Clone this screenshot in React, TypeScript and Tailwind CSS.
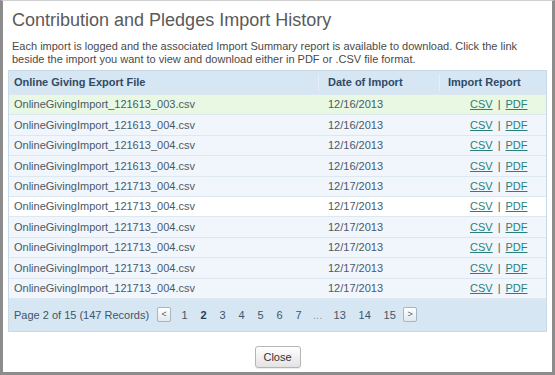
const rows = [
  { file: "OnlineGivingImport_121613_003.csv", date: "12/16/2013", bg: "bg-[#e9f8e2]" },
  { file: "OnlineGivingImport_121613_004.csv", date: "12/16/2013", bg: "bg-[#f0f6fc]" },
  { file: "OnlineGivingImport_121613_004.csv", date: "12/16/2013", bg: "bg-[#f0f6fc]" },
  { file: "OnlineGivingImport_121613_004.csv", date: "12/16/2013", bg: "bg-[#f0f6fc]" },
  { file: "OnlineGivingImport_121713_004.csv", date: "12/17/2013", bg: "bg-[#f0f6fc]" },
  { file: "OnlineGivingImport_121713_004.csv", date: "12/17/2013", bg: "bg-white" },
  { file: "OnlineGivingImport_121713_004.csv", date: "12/17/2013", bg: "bg-[#f0f6fc]" },
  { file: "OnlineGivingImport_121713_004.csv", date: "12/17/2013", bg: "bg-[#f0f6fc]" },
  { file: "OnlineGivingImport_121713_004.csv", date: "12/17/2013", bg: "bg-[#f0f6fc]" },
  { file: "OnlineGivingImport_121713_004.csv", date: "12/17/2013", bg: "bg-[#f0f6fc]" },
];

const pages = ["1", "2", "3", "4", "5", "6", "7", "...", "13", "14", "15"];

function PagerArrow({ dir }: { dir: "prev" | "next" }) {
  return (
    <span className="flex h-[15px] w-[14px] items-center justify-center rounded-[2px] border border-[#a9b4bd] bg-gradient-to-b from-white to-[#e4e8ec] text-[9px] leading-none text-[#556677]">
      {dir === "prev" ? "<" : ">"}
    </span>
  );
}

export default function App() {
  return (
    <div className="h-[375px] w-[555px] bg-white font-['Liberation_Sans',Arial,sans-serif]">
      <div className="flex h-full flex-col border-x-[3px] border-b-[3px] border-t border-x-[#8c8c8c] border-b-[#8c8c8c] border-t-[#d0d0d0] px-[5px]">
        <h1 className="mt-[8px] pl-[4px] text-[18px] leading-[22px] font-normal text-[#5a5a5a]">
          Contribution and Pledges Import History
        </h1>
        <p className="mt-[9px] pl-[4px] text-[11px] leading-[13px] text-[#4a4a4a]">
          Each import is logged and the associated Import Summary report is available to download. Click the link beside the import you want to view and download either in PDF or .CSV file format.
        </p>

        <div className="mt-[4px] border border-[#c8dae8] text-[11px]">
          <div className="flex h-[23px] items-center bg-[#d6e6f3] font-bold text-[#2f4b66]">
            <div className="w-[310px] border-r border-[#e6eff7] pl-[5px]">Online Giving Export File</div>
            <div className="w-[121px] border-r border-[#e6eff7] pl-[9px]">Date of Import</div>
            <div className="flex-1 pl-[8px]">Import Report</div>
          </div>
          {rows.map((r, i) => (
            <div key={i} className={`flex h-[20.4px] items-center border-t border-[#dce7f0] text-[#4b5966] ${r.bg}`}>
              <div className="w-[310px] pl-[5px]">{r.file}</div>
              <div className="w-[121px] pl-[9px]">{r.date}</div>
              <div className="flex-1 pl-[30px] text-[#4b5966]">
                <a href="#" className="text-[#2a7f7a] underline">CSV</a>
                <span className="mx-[5px]">|</span>
                <a href="#" className="text-[#2a7f7a] underline">PDF</a>
              </div>
            </div>
          ))}
          <div className="flex h-[33px] items-center border-t border-[#dce7f0] bg-[#d6e6f3] pl-[5px] text-[11px] text-[#3f5569]">
            <span>Page 2 of 15 (147 Records)</span>
            <span className="ml-[8px]"><PagerArrow dir="prev" /></span>
            <div className="ml-[4px] flex items-center">
              {pages.map((p, i) => (
                <span
                  key={i}
                  className={`${p.length > 1 && p !== "..." ? "w-[25px]" : "w-[19px]"} text-center ${p === "2" ? "font-bold text-[#2a3d4f]" : ""} ${p === "..." ? "text-[#8aa0b3]" : ""}`}
                >
                  {p}
                </span>
              ))}
            </div>
            <span className="ml-[1px]"><PagerArrow dir="next" /></span>
          </div>
        </div>

        <div className="mt-[14px] flex justify-center">
          <button className="h-[22px] w-[46px] rounded-[3px] border border-[#b5b5b5] bg-gradient-to-b from-white to-[#e3e3e3] text-[11px] text-[#333] shadow-[0_1px_1px_rgba(0,0,0,0.08)]">
            Close
          </button>
        </div>
      </div>
    </div>
  );
}
